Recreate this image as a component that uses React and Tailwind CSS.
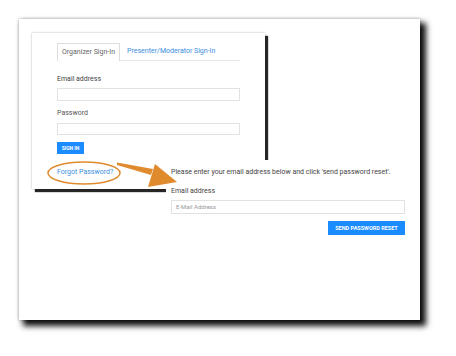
import React from "react";

export default function App() {
  return (
    <div className="relative w-[456px] h-[356px] bg-white overflow-hidden pt-[19px] pl-[19px] font-['Roboto',_'Liberation_Sans',_sans-serif]">
      <div className="relative w-[401px] h-[301px] bg-white pt-[14px] pl-[13px] shadow-[5px_5px_6px_1px_rgba(0,0,0,0.95),0_0_3px_rgba(0,0,0,0.35)]">
        {/* sign-in card */}
        <div className="w-[233px] h-[156px] bg-white pl-[25px] pt-[10px] shadow-[3px_3px_1px_rgba(0,0,0,0.85),0_0_2px_rgba(0,0,0,0.3)]">
          <div className="flex w-[183px] h-[18px]">
            <div className="w-[63px] h-[18px] border border-b-0 border-[#dddddd] text-[7px] leading-[16px] text-[#666666] text-center">
              Organizer Sign-In
            </div>
            <div className="flex-1 border-b border-[#e8e8e8] text-[7px] leading-[16px] text-[#3b8de0] pl-[7px]">
              Presenter/Moderator Sign-In
            </div>
          </div>
          <div className="mt-[13px] h-[10px] leading-[10px] text-[7px] text-[#444444]">
            Email address
          </div>
          <div className="mt-[4px] w-[183px] h-[13px] border border-[#e2e2e2]" />
          <div className="mt-[7px] h-[10px] leading-[10px] text-[7px] text-[#555555]">
            Password
          </div>
          <div className="mt-[5px] w-[183px] h-[12px] border border-[#e2e2e2]" />
          <div className="mt-[7px] w-[27px] h-[12px] bg-[#1a8cff] text-white text-[5px] font-bold leading-[12px] text-center">
            SIGN IN
          </div>
          <div className="mt-[13px] h-[10px] leading-[10px] text-[7px] text-[#3c8dde]">
            Forgot Password?
          </div>
        </div>

        {/* reset panel over the card */}
        <div className="absolute left-[147px] top-[141px] w-[248px] h-[100px] bg-white pl-[5px] pt-[7px]">
          <div className="h-[10px] leading-[10px] text-[7px] text-[#444444] whitespace-nowrap">
            Please enter your email address below and click 'send password reset'.
          </div>
          <div className="mt-[9px] h-[10px] leading-[10px] text-[7px] text-[#444444]">
            Email address
          </div>
          <div className="mt-[4px] w-[234px] h-[14px] border border-[#e2e2e2] pl-[4px] text-[6px] leading-[12px] text-[#999999]">
            E-Mail Address
          </div>
          <div className="mt-[7px] w-[234px] flex justify-end">
            <div className="w-[77px] h-[14px] bg-[#1a8cff] text-white text-[5.5px] font-bold leading-[14px] text-center">
              SEND PASSWORD RESET
            </div>
          </div>
        </div>
      </div>

      <svg
        className="absolute left-0 top-0 pointer-events-none"
        width="456"
        height="356"
        viewBox="0 0 456 356"
      >
        <ellipse cx="84" cy="173" rx="36" ry="11" fill="none" stroke="#e08a2e" strokeWidth="1.5" />
        <polygon points="117,162.5 153,169 151,175 117,165" fill="#e08a2e" />
        <polygon points="155,164 177,182 148,187" fill="#e08a2e" />
      </svg>
    </div>
  );
}
